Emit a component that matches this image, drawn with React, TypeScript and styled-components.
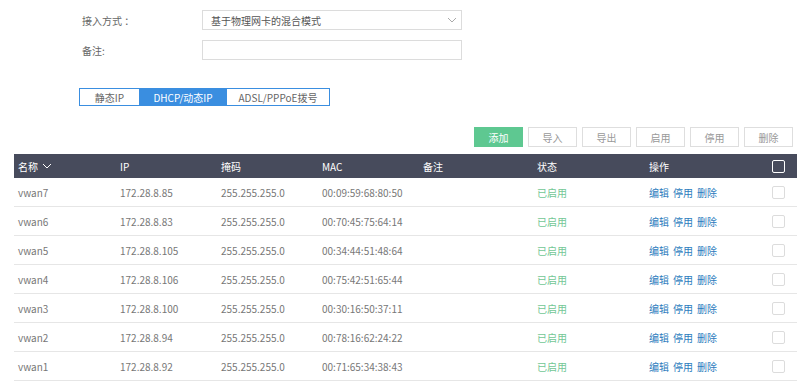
import styled, { createGlobalStyle } from "styled-components";

const Global = createGlobalStyle`
  body {
    margin: 0;
    background: #fff;
    font-family: "Noto Sans CJK SC", "Liberation Sans", sans-serif;
    font-size: 10px;
    color: #777;
  }
`;

const Page = styled.div`
  display: flex;
  flex-direction: column;
  padding: 10px 3px 0 14px;
`;

const Form = styled.div`
  display: flex;
  flex-direction: column;
  gap: 10px;
  padding-left: 68px;
`;

const FormRow = styled.div`
  display: flex;
  align-items: center;
  height: 20px;
`;

const Label = styled.div`
  width: 120px;
  color: #666;
`;

const Field = styled.div`
  position: relative;
  box-sizing: border-box;
  width: 260px;
  height: 20px;
  border: 1px solid #dcdcdc;
  display: flex;
  align-items: center;
  padding: 0 8px;
  color: #555;
`;

const Arrow = styled.svg`
  position: absolute;
  right: 4px;
  top: 5px;
`;

const Tabs = styled.div`
  display: flex;
  margin: 28px 0 0 65px;
  border: 1px solid #3a8ee0;
  width: max-content;
  height: 18px;
  box-sizing: border-box;
`;

const Tab = styled.div<{ $active?: boolean; $w: number }>`
  box-sizing: border-box;
  width: ${({ $w }) => $w}px;
  display: flex;
  align-items: center;
  justify-content: center;
  background: ${({ $active }) => ($active ? "#3a8ee0" : "#fff")};
  color: ${({ $active }) => ($active ? "#fff" : "#666")};
  border-right: 1px solid #3a8ee0;
  &:last-child {
    border-right: none;
  }
`;

const Toolbar = styled.div`
  display: flex;
  justify-content: flex-end;
  gap: 5px;
  margin-top: 21px;
  padding-right: 4px;
`;

const Btn = styled.div<{ $primary?: boolean }>`
  box-sizing: border-box;
  width: 49px;
  height: 20px;
  display: flex;
  align-items: center;
  justify-content: center;
  border: 1px solid ${({ $primary }) => ($primary ? "#5ec891" : "#dedede")};
  background: ${({ $primary }) => ($primary ? "#5ec891" : "#fff")};
  color: ${({ $primary }) => ($primary ? "#fff" : "#999")};
`;

const Table = styled.div`
  margin-top: 7px;
  display: flex;
  flex-direction: column;
`;

const cols = "102px 101px 101px 101px 114px 112px 120px 32px";

const HeadRow = styled.div`
  display: grid;
  grid-template-columns: ${cols};
  height: 24px;
  align-items: center;
  background: #474b5c;
  color: #fff;
`;

const Row = styled.div`
  display: grid;
  grid-template-columns: ${cols};
  height: 29px;
  align-items: center;
  border-bottom: 1px solid #e6e6e6;
  box-sizing: border-box;
`;

const Cell = styled.div`
  padding-left: 4px;
  display: flex;
  align-items: center;
  gap: 4px;
`;

const Status = styled(Cell)`
  color: #72c795;
`;

const Link = styled.span`
  color: #2b7bbd;
`;

const Check = styled.div<{ $head?: boolean }>`
  margin-left: 7px;
  width: 11px;
  height: 11px;
  border: 1px solid ${({ $head }) => ($head ? "#fff" : "#dcdcdc")};
  border-radius: 2px;
`;

const rows = [
  ["vwan7", "172.28.8.85", "00:09:59:68:80:50"],
  ["vwan6", "172.28.8.83", "00:70:45:75:64:14"],
  ["vwan5", "172.28.8.105", "00:34:44:51:48:64"],
  ["vwan4", "172.28.8.106", "00:75:42:51:65:44"],
  ["vwan3", "172.28.8.100", "00:30:16:50:37:11"],
  ["vwan2", "172.28.8.94", "00:78:16:62:24:22"],
  ["vwan1", "172.28.8.92", "00:71:65:34:38:43"],
];

export default function App() {
  return (
    <>
      <Global />
      <Page>
        <Form>
          <FormRow>
            <Label>接入方式 ：</Label>
            <Field>
              基于物理网卡的混合模式
              <Arrow width="10" height="8" viewBox="0 0 10 8">
                <path d="M1 2 L5 6 L9 2" fill="none" stroke="#aaa" strokeWidth="1" />
              </Arrow>
            </Field>
          </FormRow>
          <FormRow>
            <Label>备注:</Label>
            <Field />
          </FormRow>
        </Form>
        <Tabs>
          <Tab $w={60}>静态IP</Tab>
          <Tab $w={87} $active>DHCP/动态IP</Tab>
          <Tab $w={102}>ADSL/PPPoE拨号</Tab>
        </Tabs>
        <Toolbar>
          <Btn $primary>添加</Btn>
          <Btn>导入</Btn>
          <Btn>导出</Btn>
          <Btn>启用</Btn>
          <Btn>停用</Btn>
          <Btn>删除</Btn>
        </Toolbar>
        <Table>
          <HeadRow>
            <Cell>
              名称
              <svg width="10" height="8" viewBox="0 0 10 8">
                <path d="M1 2 L5 6 L9 2" fill="none" stroke="#fff" strokeWidth="1" />
              </svg>
            </Cell>
            <Cell>IP</Cell>
            <Cell>掩码</Cell>
            <Cell>MAC</Cell>
            <Cell>备注</Cell>
            <Cell>状态</Cell>
            <Cell>操作</Cell>
            <Check $head />
          </HeadRow>
          {rows.map(([name, ip, mac]) => (
            <Row key={name}>
              <Cell>{name}</Cell>
              <Cell>{ip}</Cell>
              <Cell>255.255.255.0</Cell>
              <Cell>{mac}</Cell>
              <Cell />
              <Status>已启用</Status>
              <Cell>
                <Link>编辑</Link>
                <Link>停用</Link>
                <Link>删除</Link>
              </Cell>
              <Check />
            </Row>
          ))}
        </Table>
      </Page>
    </>
  );
}
